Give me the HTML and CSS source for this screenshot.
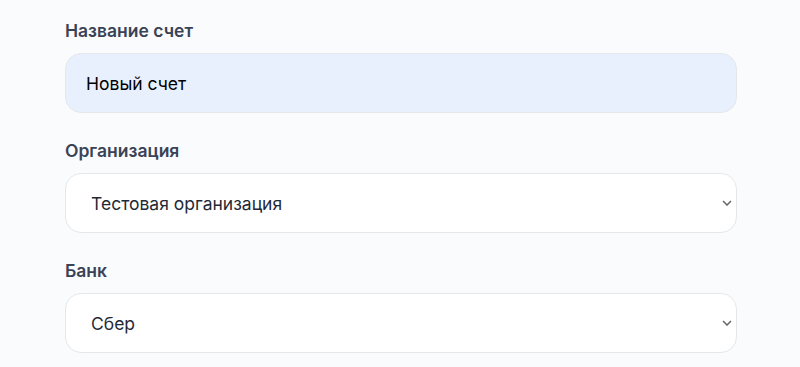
FILE: index.html
```html
<html>

<head>
    <title>Новый счет</title>
    <link rel="stylesheet" href="styles.css">
</head>

<body>
    <form class="form">
        <div class="form-group">
            <label class="form-label" for="name">Название счет</label>
            <input class="form-input form-input-filled" type="text" id="name" value="Новый счет">
        </div>
        <div class="form-group">
            <label class="form-label" for="org">Организация</label>
            <div class="select-wrap">
                <select class="form-input form-select" id="org">
                    <option>Тестовая организация</option>
                </select>
                <svg class="select-arrow" width="10" height="6" viewBox="0 0 10 6">
                    <path d="M1 1l4 4 4-4" fill="none" stroke="#6b6b6b" stroke-width="1.6" />
                </svg>
            </div>
        </div>
        <div class="form-group">
            <label class="form-label" for="bank">Банк</label>
            <div class="select-wrap">
                <select class="form-input form-select" id="bank">
                    <option>Сбер</option>
                </select>
                <svg class="select-arrow" width="10" height="6" viewBox="0 0 10 6">
                    <path d="M1 1l4 4 4-4" fill="none" stroke="#6b6b6b" stroke-width="1.6" />
                </svg>
            </div>
        </div>
    </form>
</body>

</html>
```

FILE: styles.css
```css
body {
    font-family: Inter, "Noto Sans", sans-serif;
    background-color: #fafbfd;
    margin: 0;
    padding: 0;
}

.form {
    width: 672px;
    margin: 0 65px;
    padding-top: 18px;
}

.form-group {
    margin-bottom: 25px;
}

.form-label {
    display: block;
    font-size: 17.5px;
    line-height: 26px;
    font-weight: 600;
    color: #3a4356;
    margin-bottom: 9px;
}

.form-input {
    display: block;
    box-sizing: border-box;
    width: 100%;
    height: 60px;
    padding: 0 20px;
    font-family: inherit;
    font-size: 17.5px;
    color: #1f2937;
    background-color: #ffffff;
    border: 1px solid #e5e7eb;
    border-radius: 16px;
    outline: none;
}

.form-input-filled {
    background-color: #e8f0fe;
    color: #000000;
}

.select-wrap {
    position: relative;
}

.form-select {
    appearance: none;
    -webkit-appearance: none;
    padding: 0 30px 0 25px;
}

.select-arrow {
    position: absolute;
    right: 5px;
    top: 27px;
    pointer-events: none;
}
```
